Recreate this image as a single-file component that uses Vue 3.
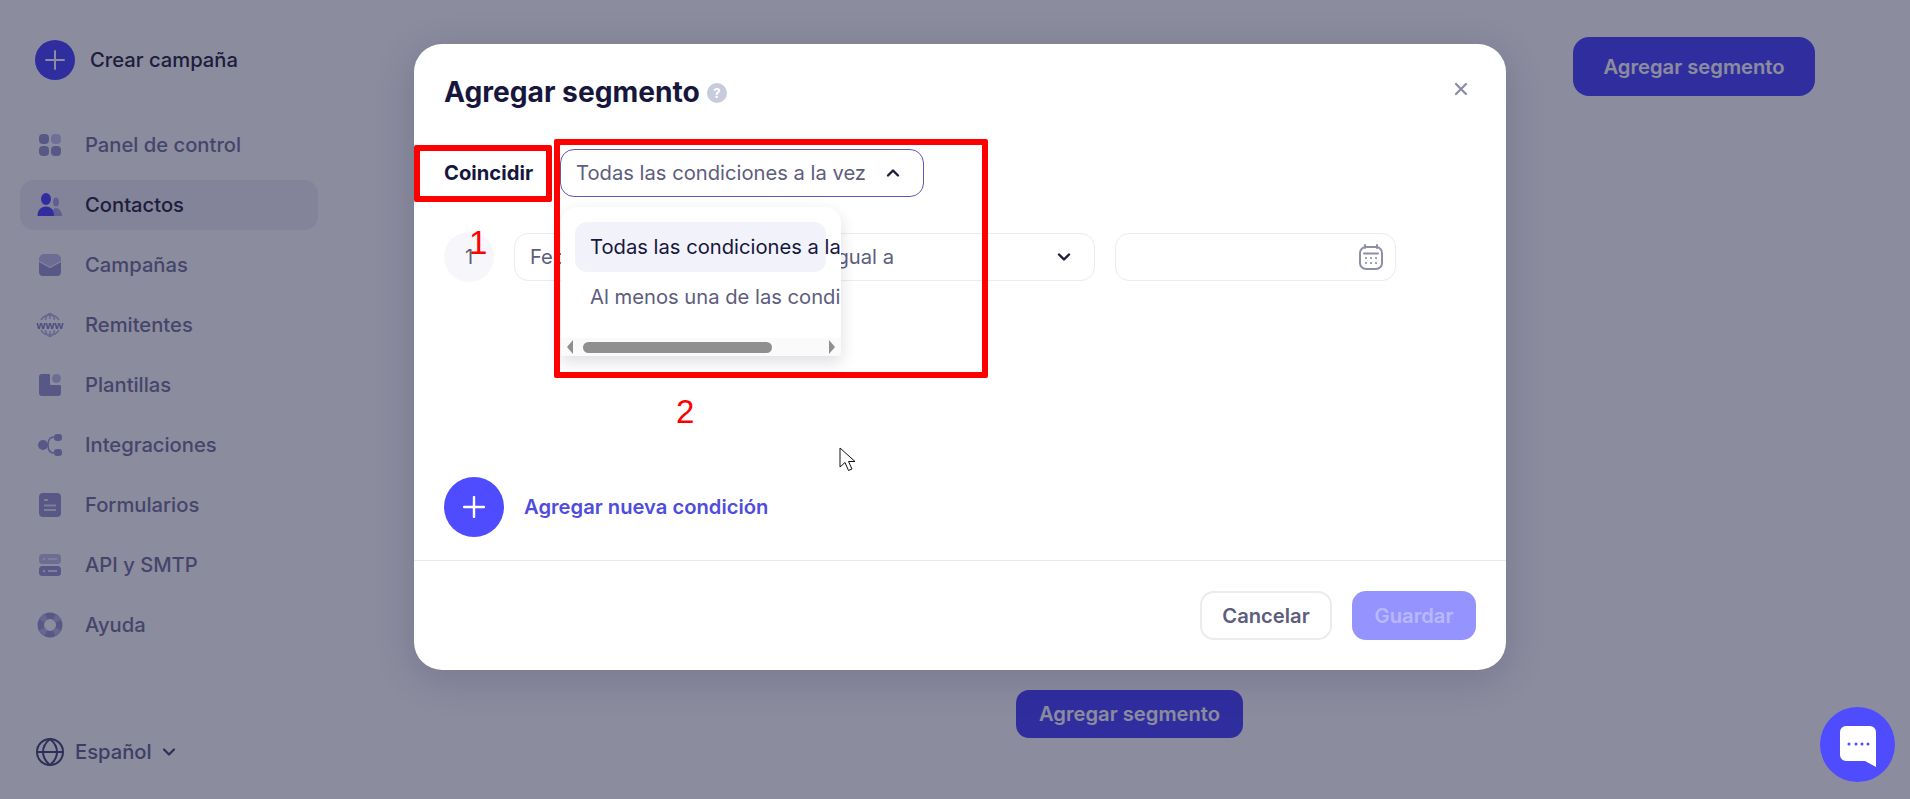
<script setup>
const navItems = [
  { key: 'panel', label: 'Panel de control' },
  { key: 'contacts', label: 'Contactos', active: true },
  { key: 'campaigns', label: 'Campañas' },
  { key: 'senders', label: 'Remitentes' },
  { key: 'templates', label: 'Plantillas' },
  { key: 'integrations', label: 'Integraciones' },
  { key: 'forms', label: 'Formularios' },
  { key: 'api', label: 'API y SMTP' },
  { key: 'help', label: 'Ayuda' },
]
</script>

<template>
  <div class="page">
    <aside class="sidebar">
      <div class="create">
        <span class="create-plus">
          <svg width="20" height="20" viewBox="0 0 20 20"><path d="M10 1v18M1 10h18" stroke="#fff" stroke-width="2" stroke-linecap="round" /></svg>
        </span>
        <span>Crear campaña</span>
      </div>
      <nav class="nav">
        <a v-for="item in navItems" :key="item.key" class="nav-item" :class="{ active: item.active }">
          <svg class="nav-icon" width="26" height="26" viewBox="0 0 26 26">
            <template v-if="item.key === 'panel'">
              <rect x="2" y="2" width="10" height="10" rx="4" fill="#9b9bd2" />
              <rect x="14" y="2" width="10" height="10" rx="4" fill="#c9c9ee" />
              <rect x="2" y="14" width="10" height="10" rx="4" fill="#9b9bd2" />
              <rect x="14" y="14" width="10" height="10" rx="4" fill="#9b9bd2" />
            </template>
            <template v-else-if="item.key === 'contacts'">
              <ellipse cx="19" cy="10" rx="3" ry="4.500" fill="#a9a9ea" />
              <path d="M15 24c0-4 1-8 4-8s6 4 6 8z" fill="#a9a9ea" />
              <ellipse cx="9" cy="7" rx="5" ry="6" fill="#4f4cff" />
              <path d="M0.500 24c0-6 3.500-9.500 8.500-9.500s8 3.500 8 9.500z" fill="#4f4cff" />
            </template>
            <template v-else-if="item.key === 'campaigns'">
              <path d="M2 7a5 5 0 0 1 5-5h12a5 5 0 0 1 5 5v2l-11 6-11-6z" fill="#c4c4ea" />
              <path d="M2 10l11 6 11-6v10a4 4 0 0 1-4 4H6a4 4 0 0 1-4-4z" fill="#9b9bd2" />
            </template>
            <template v-else-if="item.key === 'senders'">
              <path d="M4 8a10.500 10.500 0 0 1 18 0M4 18a10.500 10.500 0 0 0 18 0M13 1v6M13 19v6M8.500 8c.5-3.500 2-6 4.500-6.500 2.500.5 4 3 4.500 6.500M8.500 18c.5 3.500 2 6 4.500 6.500 2.500-.5 4-3 4.500-6.500" fill="none" stroke="#b8b8e2" stroke-width="1.500" />
              <text x="13" y="16.500" text-anchor="middle" class="www">www</text>
            </template>
            <template v-else-if="item.key === 'templates'">
              <path d="M2 5a3 3 0 0 1 3-3h7a1 1 0 0 1 1 1v9a1 1 0 0 0 1 1h9a1 1 0 0 1 1 1v7a3 3 0 0 1-3 3H5a3 3 0 0 1-3-3z" fill="#9b9bd2" />
              <circle cx="19.500" cy="6.500" r="4.500" fill="#c4c4ea" />
            </template>
            <template v-else-if="item.key === 'integrations'">
              <path d="M7 13h4M11 13c0-5 2-8 6-8M11 13c0 5 2 8 6 8" fill="none" stroke="#9b9bd2" stroke-width="1.500" />
              <circle cx="6" cy="13" r="5" fill="#9b9bd2" />
              <rect x="17" y="2" width="8" height="7" rx="3" fill="#9b9bd2" />
              <rect x="17" y="17" width="8" height="7" rx="3" fill="#9b9bd2" />
            </template>
            <template v-else-if="item.key === 'forms'">
              <rect x="2" y="1" width="22" height="24" rx="4" fill="#9b9bd2" />
              <path d="M7 8h4M7 13.500h12M7 18h12" stroke="#e4e4f6" stroke-width="2" />
            </template>
            <template v-else-if="item.key === 'api'">
              <rect x="2" y="2" width="22" height="10" rx="3.500" fill="#c4c4ea" />
              <rect x="2" y="14" width="22" height="10" rx="3.500" fill="#9b9bd2" />
              <circle cx="7" cy="7" r="1.300" fill="#e4e4f6" />
              <path d="M11 7h9" stroke="#e4e4f6" stroke-width="2" />
              <circle cx="7" cy="19" r="1.300" fill="#e4e4f6" />
              <path d="M11 19h9" stroke="#e4e4f6" stroke-width="2" />
            </template>
            <template v-else-if="item.key === 'help'">
              <circle cx="13" cy="13" r="9.250" fill="none" stroke="#9b9bd2" stroke-width="6.500" />
              <circle cx="13" cy="13" r="9.250" fill="none" stroke="#b8b8e4" stroke-width="6.500" stroke-dasharray="6 8.530" transform="rotate(26.400 13 13)" />
            </template>
          </svg>
          <span>{{ item.label }}</span>
        </a>
      </nav>
      <div class="lang">
        <svg width="30" height="30" viewBox="0 0 30 30" fill="none" stroke="#4c4c78" stroke-width="2">
          <circle cx="15" cy="15" r="13" />
          <path d="M2 15h26M15 2c-5 4-7 8-7 13s2 9 7 13c5-4 7-8 7-13s-2-9-7-13z" />
        </svg>
        <span>Español</span>
        <svg width="14" height="10" viewBox="0 0 14 10" fill="none" stroke="#4c4c78" stroke-width="2.200" stroke-linecap="round" stroke-linejoin="round"><path d="M2 2.500l5 5 5-5" /></svg>
      </div>
    </aside>

    <main class="content">
      <button class="primary top-btn">Agregar segmento</button>
      <button class="primary bottom-btn">Agregar segmento</button>
    </main>

    <div class="overlay">
      <section class="modal">
        <header class="modal-head">
          <h2>Agregar segmento</h2>
          <span class="help-dot">?</span>
          <svg class="close" width="14" height="14" viewBox="0 0 14 14"><path d="M2 2l10 10M12 2L2 12" stroke="#8a8aa6" stroke-width="2.200" stroke-linecap="round" /></svg>
        </header>

        <div class="match-row">
          <strong>Coincidir</strong>
          <div class="match-wrap">
            <div class="match-select">
              <span>Todas las condiciones a la vez</span>
              <svg width="14" height="10" viewBox="0 0 14 10" fill="none" stroke="#1d1d3a" stroke-width="2.400" stroke-linecap="round" stroke-linejoin="round"><path d="M2 7.500l5-5 5 5" /></svg>
            </div>
            <div class="menu">
              <div class="menu-list">
                <div class="menu-opt selected">Todas las condiciones a la vez</div>
                <div class="menu-opt">Al menos una de las condiciones</div>
              </div>
              <div class="fake-scroll">
                <i class="arrow left"></i>
                <i class="thumb"></i>
                <i class="arrow right"></i>
              </div>
            </div>
          </div>
        </div>

        <div class="cond-row">
          <span class="cond-num">1</span>
          <div class="field field-first">Fecha</div>
          <div class="field field-mid">
            <span>Igual a</span>
            <svg width="14" height="10" viewBox="0 0 14 10" fill="none" stroke="#1d1d3a" stroke-width="2.400" stroke-linecap="round" stroke-linejoin="round"><path d="M2 2.500l5 5 5-5" /></svg>
          </div>
          <div class="field field-date">
            <svg width="26" height="26" viewBox="0 0 26 26" fill="none" stroke="#8e8ea8" stroke-width="2">
              <rect x="2" y="3" width="22" height="22" rx="6" />
              <path d="M7 1v3M19 1v3M6 9.500h14" stroke-linecap="round" />
              <path d="M8 14h.01M13 14h.01M18 14h.01M8 19h.01M13 19h.01M18 19h.01" stroke-width="2.200" stroke-linecap="round" />
            </svg>
          </div>
        </div>

        <div class="add-row">
          <span class="add-plus">
            <svg width="22" height="22" viewBox="0 0 22 22"><path d="M11 1v20M1 11h20" stroke="#fff" stroke-width="2.400" stroke-linecap="round" /></svg>
          </span>
          <span class="add-label">Agregar nueva condición</span>
        </div>

        <footer class="modal-foot">
          <button class="btn-cancel">Cancelar</button>
          <button class="btn-save">Guardar</button>
        </footer>

        <!-- red marks drawn on the capture -->
        <div class="mark mark-one"></div>
        <div class="mark mark-two"></div>
        <span class="mark-num num-one">1</span>
        <span class="mark-num num-two">2</span>

        <svg class="cursor" width="17" height="25" viewBox="0 0 17 25">
          <path d="M1 1v19l5-4.500 3.500 8 3.500-1.500-3.500-7.500h6.500z" fill="#fff" stroke="#111" stroke-width="1" />
        </svg>
      </section>
    </div>

    <button class="chat">
      <svg width="36" height="41" viewBox="0 0 36 41">
        <path d="M6 0h24a6 6 0 0 1 6 6v35l-11-6H6a6 6 0 0 1-6-6V6a6 6 0 0 1 6-6z" fill="#fff" />
        <path d="M9 18h.01M16 18h.01M22 18h.01M28 18h.01" stroke="#4f4cff" stroke-width="3" stroke-linecap="round" />
      </svg>
    </button>
  </div>
</template>

<style>
html, body {
  margin: 0;
  overflow: hidden;
  background: #fff;
}
</style>

<style scoped>
.page {
  position: relative;
  display: flex;
  width: 1910px;
  height: 799px;
  overflow: hidden;
  font-family: Inter, "Liberation Sans", sans-serif;
  font-size: 20.200px;
  line-height: 24px;
  color: #77779a;
}

.sidebar {
  width: 336px;
  flex-shrink: 0;
  padding: 40px 18px 0 20px;
  box-sizing: border-box;
}

.create {
  display: flex;
  align-items: center;
  gap: 15px;
  margin-left: 15px;
  color: #2c2c41;
  font-weight: 500;
}

.create-plus {
  display: flex;
  align-items: center;
  justify-content: center;
  width: 40px;
  height: 40px;
  border-radius: 50%;
  background: #4f4cff;
}

.nav {
  display: flex;
  flex-direction: column;
  gap: 10px;
  margin-top: 40px;
}

.nav-item {
  display: flex;
  align-items: center;
  gap: 22px;
  height: 50px;
  padding-left: 17px;
  border-radius: 14px;
  font-weight: 500;
}

.nav-item.active {
  background: #eeeef4;
  color: #2c2c41;
}

.nav-icon {
  overflow: visible;
}

.www {
  font-family: "Liberation Sans", sans-serif;
  font-size: 11.500px;
  font-weight: 700;
  fill: #8585c4;
}

.lang {
  display: flex;
  align-items: center;
  gap: 10px;
  margin: 87px 0 0 15px;
  font-weight: 500;
  color: #6a6a90;
}

.content {
  flex: 1;
  display: flex;
  flex-direction: column;
  align-items: flex-start;
  padding-top: 37px;
}

.primary {
  border: none;
  background: #4f4cff;
  color: #fff;
  font-family: inherit;
  font-size: 20.200px;
  line-height: 24px;
  font-weight: 600;
}

.top-btn {
  width: 242px;
  height: 59px;
  margin-left: 1237px;
  border-radius: 16px;
}

.bottom-btn {
  width: 227px;
  height: 48px;
  margin: 594px 0 0 680px;
  border-radius: 13px;
}

.overlay {
  position: absolute;
  inset: 0;
  padding: 44px 0 0 414px;
  box-sizing: border-box;
  background: rgba(15, 15, 54, 0.48);
}

.modal {
  position: relative;
  width: 1092px;
  height: 626px;
  box-sizing: border-box;
  padding-top: 31px;
  border-radius: 28px;
  background: #fff;
  box-shadow: 0 8px 40px rgba(15, 15, 54, 0.16);
  color: #5d5d7d;
}

.modal-head {
  display: flex;
  align-items: center;
  gap: 7px;
  height: 34px;
  padding: 0 38px 0 30px;
}

.modal-head h2 {
  margin: 0;
  font-size: 28.200px;
  line-height: 34px;
  font-weight: 700;
  color: #17173d;
}

.help-dot {
  display: flex;
  align-items: center;
  justify-content: center;
  width: 20px;
  height: 20px;
  margin-top: 2px;
  border-radius: 50%;
  background: #c8cbdc;
  color: #fff;
  font-size: 13px;
  font-weight: 700;
}

.close {
  margin-left: auto;
  margin-top: -6px;
}

.match-row {
  display: flex;
  align-items: center;
  margin-top: 40px;
  padding-left: 30px;
}

.match-row strong {
  width: 116px;
  color: #17173d;
  font-weight: 700;
}

.match-wrap {
  position: relative;
}

.match-select {
  display: flex;
  align-items: center;
  justify-content: space-between;
  width: 364px;
  height: 48px;
  box-sizing: border-box;
  padding: 0 23px 0 15px;
  border: 1px solid #5a5ab0;
  border-radius: 14px;
}

.menu {
  position: absolute;
  z-index: 2;
  top: 58px;
  left: 1px;
  width: 280px;
  height: 149px;
  display: flex;
  flex-direction: column;
  justify-content: space-between;
  overflow: hidden;
  border-radius: 16px 16px 4px 4px;
  background: #fff;
  box-shadow: 0 6px 16px rgba(20, 20, 60, 0.14);
}

.menu-list {
  padding: 15px 0 0 14px;
}

.menu-opt {
  display: flex;
  align-items: center;
  width: 251px;
  height: 50px;
  padding-left: 15px;
  box-sizing: border-box;
  border-radius: 12px;
  white-space: nowrap;
}

.menu-opt.selected {
  background: #f2f3fa;
  color: #17173d;
}

.fake-scroll {
  display: flex;
  align-items: center;
  height: 18px;
  padding: 0 6px;
  background: #fafafa;
}

.thumb {
  width: 189px;
  height: 11px;
  margin-left: 10px;
  border-radius: 6px;
  background: #8f8f8f;
}

.arrow {
  width: 0;
  height: 0;
  border-top: 7px solid transparent;
  border-bottom: 7px solid transparent;
}

.arrow.left {
  border-right: 6px solid #8f8f8f;
}

.arrow.right {
  margin-left: auto;
  border-left: 6px solid #8f8f8f;
}

.cond-row {
  display: flex;
  align-items: center;
  margin-top: 35px;
  padding-left: 30px;
}

.cond-num {
  display: flex;
  align-items: center;
  justify-content: center;
  width: 50px;
  height: 50px;
  margin-right: 20px;
  border-radius: 50%;
  background: #f7f7fb;
}

.field {
  display: flex;
  align-items: center;
  height: 48px;
  box-sizing: border-box;
  border: 1px solid #ebebf0;
  border-radius: 14px;
}

.field-first {
  width: 280px;
  padding-left: 15px;
}

.field-mid {
  width: 279px;
  margin-left: 22px;
  padding: 0 23px 0 14px;
  justify-content: space-between;
}

.field-date {
  width: 281px;
  margin-left: 20px;
  padding-right: 11px;
  justify-content: flex-end;
}

.add-row {
  display: flex;
  align-items: center;
  gap: 20px;
  margin-top: 195px;
  padding-left: 30px;
}

.add-plus {
  display: flex;
  align-items: center;
  justify-content: center;
  width: 60px;
  height: 60px;
  border-radius: 50%;
  background: #4f4cff;
}

.add-label {
  color: #4f4ce0;
  font-weight: 600;
}

.modal-foot {
  display: flex;
  justify-content: flex-end;
  gap: 20px;
  margin-top: 23px;
  padding: 30px 30px 0 0;
  border-top: 1px solid #e8e8ee;
}

.modal-foot button {
  height: 49px;
  border-radius: 14px;
  font-family: inherit;
  font-size: 20.200px;
  line-height: 24px;
  font-weight: 600;
}

.btn-cancel {
  width: 132px;
  border: 2px solid #ececf0;
  background: #fff;
  color: #5d5d7d;
}

.btn-save {
  width: 124px;
  border: none;
  background: #9594ff;
  color: #b9b8ff;
}

.mark {
  position: absolute;
  z-index: 3;
  box-sizing: border-box;
  border: 6px solid #f00;
  border-radius: 2px;
  pointer-events: none;
}

.mark-one {
  top: 101px;
  left: 0;
  width: 138px;
  height: 57px;
}

.mark-two {
  top: 95px;
  left: 140px;
  width: 434px;
  height: 239px;
}

.mark-num {
  position: absolute;
  z-index: 3;
  color: #f00;
  font-family: "Liberation Sans", sans-serif;
  font-size: 33px;
  line-height: 1;
}

.num-one {
  top: 182px;
  left: 55px;
}

.num-two {
  top: 351px;
  left: 262px;
}

.cursor {
  position: absolute;
  top: 403px;
  left: 425px;
}

.chat {
  position: absolute;
  top: 707px;
  left: 1820px;
  display: flex;
  align-items: center;
  justify-content: center;
  width: 75px;
  height: 75px;
  padding: 4px 0 0;
  border: none;
  border-radius: 50%;
  background: #4f4cff;
}
</style>
